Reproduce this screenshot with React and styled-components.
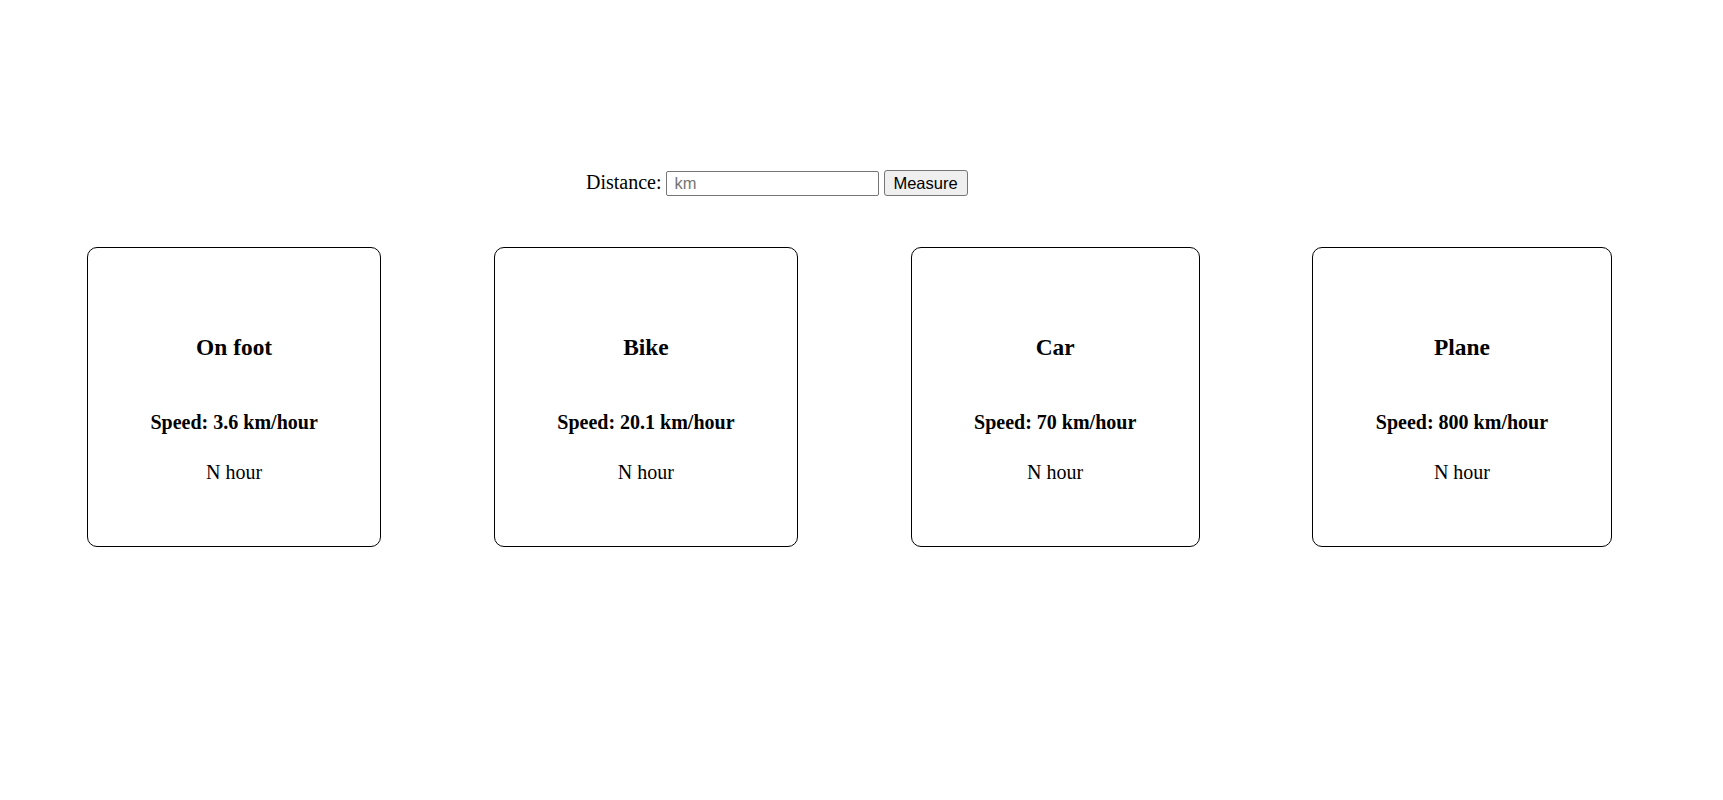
import React from 'react';
import styled, { createGlobalStyle } from 'styled-components';

const vehicles = [
  { id: 1, name: 'On foot', speed: '3.6' },
  { id: 2, name: 'Bike', speed: '20.1' },
  { id: 3, name: 'Car', speed: '70' },
  { id: 4, name: 'Plane', speed: '800' },
];

function App() {
  return (
    <Page>
      <GlobalStyle />
      <Form>
        <Label htmlFor="distance">Distance:</Label>
        <Input id="distance" type="text" placeholder="km" />
        <Button type="button">Measure</Button>
      </Form>
      <CardRow>
        {vehicles.map((v) => (
          <Card key={v.id}>
            <Title>{v.name}</Title>
            <Speed>Speed: {v.speed} km/hour</Speed>
            <Result>N hour</Result>
          </Card>
        ))}
      </CardRow>
    </Page>
  );
}

export default App;

const GlobalStyle = createGlobalStyle`
  body {
    margin: 0;
    background: #fff;
    color: #000;
    font-family: "Liberation Serif", "Times New Roman", serif;
  }
`;

const Page = styled.div`
  display: flex;
  flex-direction: column;
  min-height: 800px;
  padding-top: 170px;
  box-sizing: border-box;
`;

const Form = styled.div`
  display: flex;
  align-items: baseline;
  padding-left: 586px;
`;

const Label = styled.label`
  font-size: 20px;
  margin-right: 4px;
`;

const Input = styled.input`
  box-sizing: border-box;
  width: 213px;
  height: 25px;
  padding: 0 8px;
  border: 1px solid #767676;
  border-radius: 2px;
  font-family: "Liberation Sans", Arial, sans-serif;
  font-size: 16.5px;
  color: #000;
  outline: none;

  &::placeholder {
    color: #757575;
  }
`;

const Button = styled.button`
  box-sizing: border-box;
  width: 84px;
  height: 26px;
  margin-left: 5px;
  padding: 0;
  border: 1px solid #767676;
  border-radius: 3px;
  background: #efefef;
  font-family: "Liberation Sans", Arial, sans-serif;
  font-size: 16.5px;
  color: #000;
`;

const CardRow = styled.div`
  display: flex;
  align-items: flex-start;
  gap: 112.5px;
  padding-left: 87px;
  margin-top: 51px;
`;

const Card = styled.div`
  display: flex;
  flex-direction: column;
  align-items: center;
  box-sizing: border-box;
  height: 300px;
  padding: 86px 62.5px 0;
  border: 1px solid #000;
  border-radius: 10px;
`;

const Title = styled.h3`
  margin: 0;
  font-size: 23.4px;
  font-weight: bold;
`;

const Speed = styled.h4`
  margin: 50px 0 0;
  font-size: 20px;
  font-weight: bold;
  white-space: nowrap;
`;

const Result = styled.p`
  margin: 27px 0 0;
  font-size: 20px;
`;
